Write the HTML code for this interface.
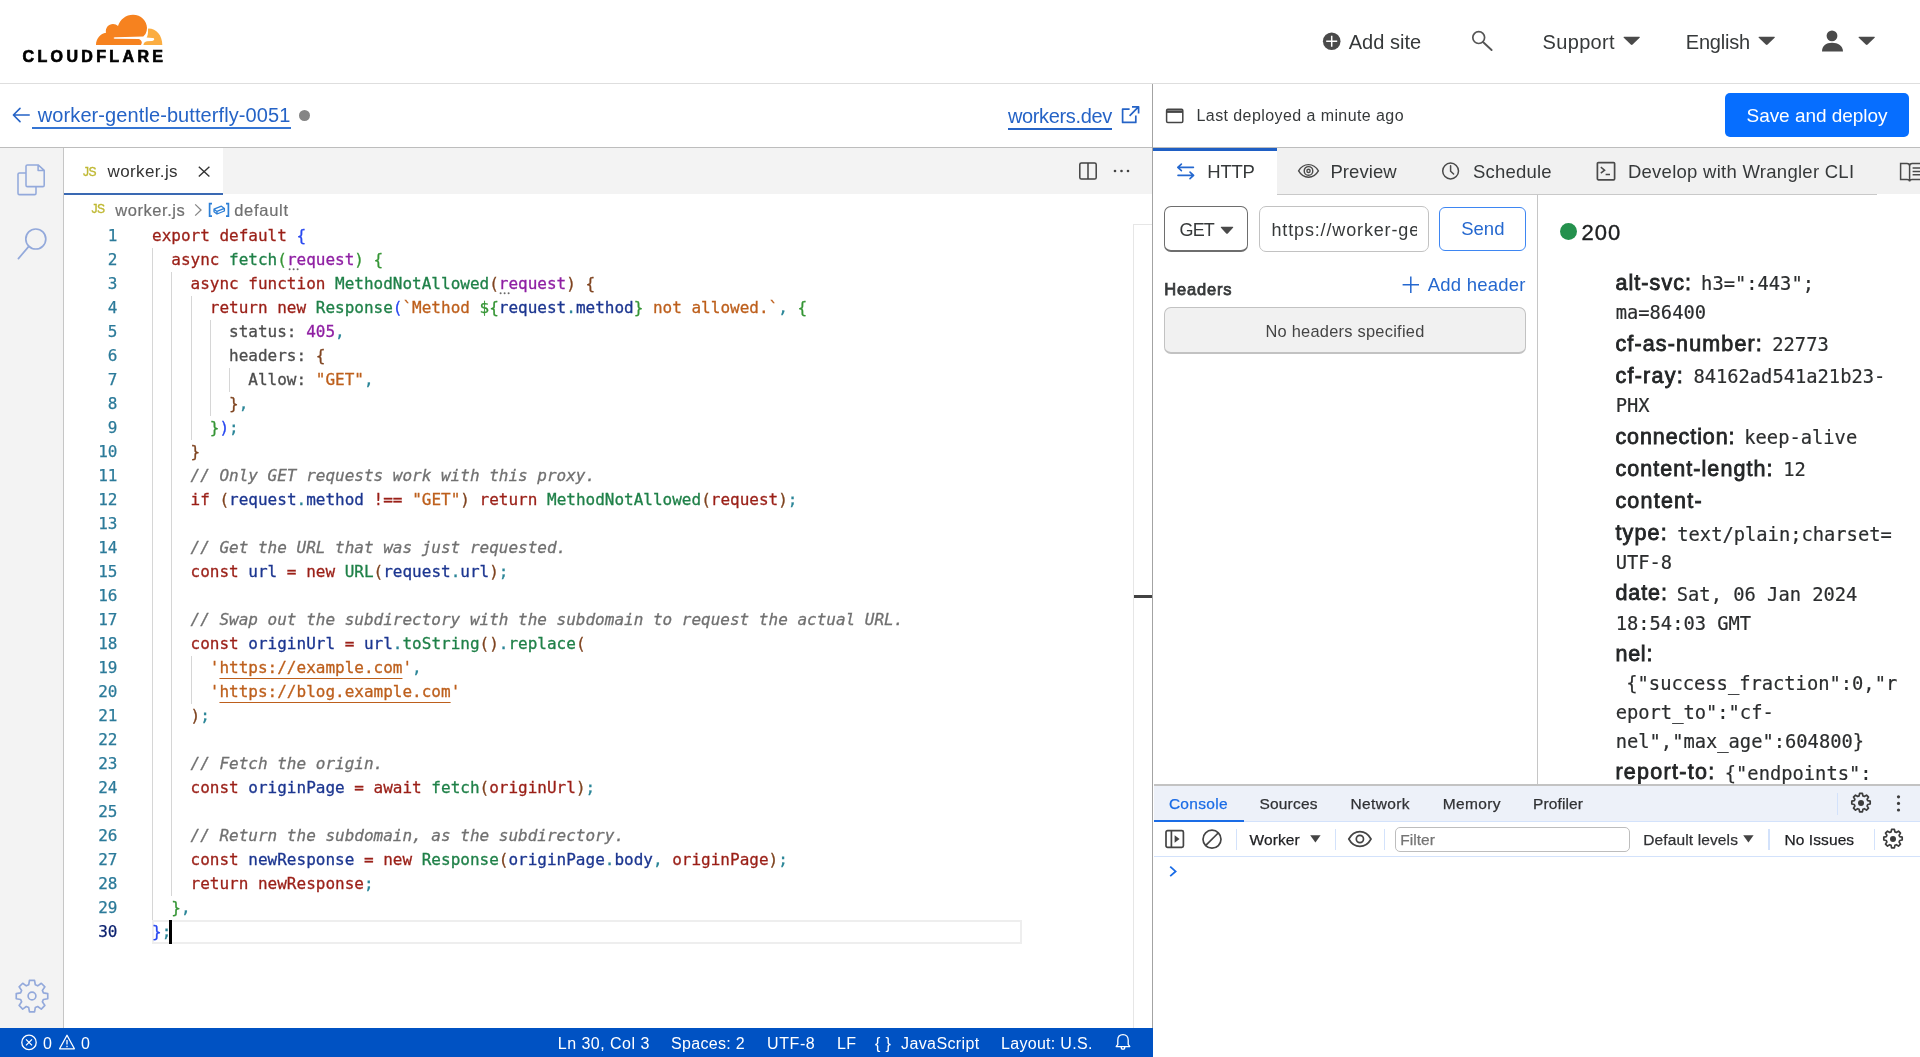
<!DOCTYPE html>
<html lang="en">
<head>
<meta charset="utf-8">
<title>Cloudflare Workers Editor</title>
<style>
*{box-sizing:border-box;margin:0;padding:0}
html,body{width:1920px;height:1057px;overflow:hidden;background:#fff}
body{font-family:"Liberation Sans",sans-serif;color:#313131;position:relative}
#app{position:absolute;left:0;top:0;width:1920px;height:1057px;will-change:transform}
.abs{position:absolute}
.t{position:absolute;white-space:pre;line-height:1}
svg{position:absolute;overflow:visible}
.mono{font-family:"DejaVu Sans Mono","Liberation Mono",monospace}
.ln{-webkit-text-stroke:0.25px;position:absolute;left:64px;width:53.5px;text-align:right;font-size:16px;line-height:24px;height:24px;color:#2b7a99;font-family:"DejaVu Sans Mono","Liberation Mono",monospace}
.cl{-webkit-text-stroke:0.3px;position:absolute;left:152px;font-size:16px;line-height:24px;height:24px;white-space:pre;font-family:"DejaVu Sans Mono","Liberation Mono",monospace;color:#3b3b3b}
.k{color:#9a1f17}.f{color:#1f8048}.p{color:#8f1fa3}.v{color:#1c3690}.s{color:#bd5f1c}.c{color:#707070;font-style:italic}
.n{color:#8f1fa3}.o{color:#2a8597}.g{color:#4d4d4d}
.b1{color:#2848f0}.b2{color:#359535}.b3{color:#7f4420}
.u{text-decoration:underline;text-underline-offset:4.5px;text-decoration-thickness:1px}
.guide{position:absolute;width:1px;background:#d6d6d6}
</style>
</head>
<body>
<div id="app">
<div class="abs" style="left:0;top:0;width:1920px;height:84.3px;border-bottom:1.6px solid #dedede"></div>
<div class="abs" style="left:0;top:146.5px;width:1920px;height:1.4px;background:#bdbdbd"></div>
<div class="abs" style="left:1152px;top:83.5px;width:1.3px;height:974px;background:#a3a3a3"></div>
<svg style="left:0;top:0" width="200" height="84" viewBox="0 0 200 84">
<path fill="#f6821f" d="M96 45 C96 38.5 100.5 33.5 106 32.8 C105 28 108.5 24 113 24 C115 24 116.8 24.8 118 26 C120 19.5 126 14.7 133 14.7 C141 14.7 147 21 147 28 C147 30 146.5 32 145.5 34 L143.3 36.5 L116 37.25 C114.4 37.3 113.6 37.6 113.6 38 C113.6 38.5 114.3 38.7 115.5 38.7 L139 38.9 C141.5 40 142.3 42 141.6 43.6 L141 45 Z"/>
<path fill="#fbad41" d="M148.5 28.5 C156.5 28.5 162.3 35.5 162.3 45 L143.4 45 C143.6 43.3 144.8 41.6 147 41.3 L152 40.9 C153.5 40.7 154.2 40 154.2 39.2 C154.2 38.4 153.6 38 152.5 38 L146.6 37.6 C147.6 36 148.2 33.5 148 30.2 C148 29.2 148.1 28.5 148.5 28.5 Z"/>
</svg>
<div class="t " style="left:22.6px;top:48.9px;font-size:16px;color:#000;letter-spacing:3.35px;font-weight:700;-webkit-text-stroke:0.7px #000;">CLOUDFLARE</div>
<svg style="left:1322px;top:32px" width="20" height="20" viewBox="0 0 20 20"><circle cx="9.7" cy="9.2" r="8.8" fill="#4a4a4a"/><path d="M9.7 3.7v11M4.2 9.2h11" stroke="#fff" stroke-width="1.5"/></svg>
<div class="t " style="left:1348.7px;top:32.3px;font-size:20px;color:#36393a;letter-spacing:0.04px;">Add site</div>
<svg style="left:1470px;top:30px" width="24" height="24" viewBox="0 0 24 24"><circle cx="8.7" cy="7.6" r="5.9" fill="none" stroke="#555" stroke-width="1.7"/><path d="M13 12 L21.6 20" stroke="#555" stroke-width="1.9" stroke-linecap="round"/></svg>
<div class="t " style="left:1542.5px;top:32.3px;font-size:20px;color:#36393a;letter-spacing:0.35px;">Support</div>
<svg style="left:1622.8px;top:35.9px" width="18" height="10" viewBox="0 0 18 10"><path d="M1.2 0.8 H16.2 Q17.4 0.8 16.6 1.8 L9.6 8.6 Q8.7 9.4 7.8 8.6 L0.8 1.8 Q0 0.8 1.2 0.8Z" fill="#4a4a4a"/></svg>
<div class="t " style="left:1685.8px;top:32.3px;font-size:20px;color:#36393a;letter-spacing:-0.2px;">English</div>
<svg style="left:1757.8px;top:35.9px" width="18" height="10" viewBox="0 0 18 10"><path d="M1.2 0.8 H16.2 Q17.4 0.8 16.6 1.8 L9.6 8.6 Q8.7 9.4 7.8 8.6 L0.8 1.8 Q0 0.8 1.2 0.8Z" fill="#4a4a4a"/></svg>
<svg style="left:1820px;top:28px" width="26" height="26" viewBox="0 0 26 26"><circle cx="12" cy="7.9" r="5.4" fill="#4a4a4a"/><path d="M2 23.4 C2 18 6 14.8 12 14.8 C18 14.8 23 18 23 23.4 Z" fill="#4a4a4a"/></svg>
<svg style="left:1857.8px;top:35.9px" width="18" height="10" viewBox="0 0 18 10"><path d="M1.2 0.8 H16.2 Q17.4 0.8 16.6 1.8 L9.6 8.6 Q8.7 9.4 7.8 8.6 L0.8 1.8 Q0 0.8 1.2 0.8Z" fill="#4a4a4a"/></svg>
<svg style="left:10px;top:104px" width="24" height="22" viewBox="0 0 24 22"><path d="M19.2 11 H3.6 M10 4.4 L3.4 11 L10 17.6" fill="none" stroke="#2563c6" stroke-width="1.6" stroke-linecap="round" stroke-linejoin="round"/></svg>
<div class="t " style="left:37.8px;top:104.5px;font-size:20px;color:#2563c6;letter-spacing:0.09px;">worker-gentle-butterfly-0051</div>
<div class="abs" style="left:32px;top:126.8px;width:259px;height:2px;background:#3575d3"></div>
<div class="abs" style="left:299px;top:109.6px;width:11px;height:11px;border-radius:50%;background:#858585"></div>
<div class="t " style="left:1007.9px;top:106.0px;font-size:20px;color:#2563c6;letter-spacing:-0.34px;">workers.dev</div>
<div class="abs" style="left:1007.5px;top:128.3px;width:104.5px;height:2.1px;background:#2563c6"></div>
<svg style="left:1120px;top:104px" width="22" height="22" viewBox="0 0 22 22"><path d="M9.6 5.2 H2.6 V18.4 H15.8 V11.4 M12 2.8 H18.6 V9.4 M18.2 3.2 L9.6 11.8" fill="none" stroke="#2563c6" stroke-width="1.7" stroke-linejoin="round"/></svg>
<svg style="left:1164px;top:106px" width="22" height="20" viewBox="0 0 22 20"><rect x="2.6" y="3.2" width="16.2" height="13.2" rx="1.2" fill="none" stroke="#444" stroke-width="1.5"/><path d="M2.6 5.6 H18.8" stroke="#444" stroke-width="2.6"/></svg>
<div class="t " style="left:1196.5px;top:107.6px;font-size:16px;color:#36393a;letter-spacing:0.42px;">Last deployed a minute ago</div>
<div class="abs" style="left:1725px;top:93px;width:184px;height:44px;border-radius:5px;background:#066eff"></div>
<div class="t " style="left:1746.5px;top:106.0px;font-size:19px;color:#fff;letter-spacing:-0.04px;">Save and deploy</div>
<div class="abs" style="left:0;top:148px;width:64px;height:880px;background:#f3f3f3;border-right:1.5px solid #c6c6c6"></div>
<svg style="left:0px;top:148px" width="64" height="60" viewBox="0 0 64 60"><g fill="none" stroke="#93a9db" stroke-width="1.55" stroke-linejoin="round"><path d="M27.4 16.9 H38.1 L44.2 22.4 V37.2 Q44.2 38.6 42.8 38.6 H27.4 Q26 38.6 26 37.2 V18.3 Q26 16.9 27.4 16.9 Z M38.1 16.9 V22.4 H44.2"/><path d="M26 24.9 H19.4 Q18 24.9 18 26.3 V45.2 Q18 46.6 19.4 46.6 H34.6 Q36 46.6 36 45.2 V38.6"/></g></svg>
<svg style="left:14px;top:224px" width="38" height="40" viewBox="0 0 38 40"><circle cx="21.8" cy="15" r="10" fill="none" stroke="#93a9db" stroke-width="1.7"/><path d="M14.8 22.4 L4.4 34.6" stroke="#93a9db" stroke-width="1.7" stroke-linecap="round"/></svg>
<svg style="left:14px;top:978px" width="36" height="36" viewBox="0 0 24 24"><g fill="none" stroke="#93a9db" stroke-width="1.1" stroke-linejoin="round"><path d="M10.3 1.6h3.4l.5 2.9 1.6.7 2.4-1.7 2.4 2.4-1.7 2.4.7 1.6 2.9.5v3.4l-2.9.5-.7 1.6 1.7 2.4-2.4 2.4-2.4-1.7-1.6.7-.5 2.9h-3.4l-.5-2.9-1.6-.7-2.4 1.7-2.4-2.4 1.7-2.4-.7-1.6-2.9-.5v-3.4l2.9-.5.7-1.6-1.7-2.4 2.4-2.4 2.4 1.7 1.6-.7z"/><circle cx="12" cy="12" r="2.6"/></g></svg>
<div class="abs" style="left:64px;top:148px;width:1088px;height:46px;background:#f3f3f3"></div>
<div class="abs" style="left:64px;top:148px;width:158.5px;height:46.6px;background:#fff;border-bottom:2px solid #3a69b3"></div>
<div class="t " style="left:83.0px;top:165.7px;font-size:12px;color:#bfb832;letter-spacing:-0.5px;-webkit-text-stroke:0.35px;">JS</div>
<div class="t " style="left:107.5px;top:162.9px;font-size:17px;color:#333;letter-spacing:0.38px;">worker.js</div>
<svg style="left:196px;top:164px" width="16" height="16" viewBox="0 0 16 16"><path d="M2.8 2.8 L13.4 12.6 M13.4 2.8 L2.8 12.6" stroke="#333" stroke-width="1.4"/></svg>
<svg style="left:1076.5px;top:159.6px" width="22" height="22" viewBox="0 0 22 22"><rect x="2.8" y="3" width="16.4" height="16" rx="1.6" fill="none" stroke="#424242" stroke-width="1.5"/><path d="M11 3 V19" stroke="#424242" stroke-width="1.5"/></svg>
<svg style="left:1112px;top:166px" width="20" height="10" viewBox="0 0 20 10"><circle cx="3" cy="5" r="1.3" fill="#424242"/><circle cx="9.5" cy="5" r="1.3" fill="#424242"/><circle cx="16" cy="5" r="1.3" fill="#424242"/></svg>
<div class="t " style="left:91.4px;top:203.2px;font-size:12px;color:#bfb832;letter-spacing:-0.5px;-webkit-text-stroke:0.35px;">JS</div>
<div class="t " style="left:115.3px;top:201.5px;font-size:16.5px;color:#707070;letter-spacing:0.54px;-webkit-text-stroke:0.2px;">worker.js</div>
<svg style="left:192px;top:202px" width="12" height="16" viewBox="0 0 12 16"><path d="M3.2 2.4 L9 8 L3.2 13.6" fill="none" stroke="#868686" stroke-width="1.3"/></svg>
<svg style="left:207px;top:201px" width="24" height="18" viewBox="0 0 24 18"><g fill="none" stroke="#2d7fd6" stroke-width="1.7"><path d="M5 2.6 H2.6 V15.2 H5 M19 2.6 H21.4 V15.2 H19"/><path d="M7 8.2 L14.4 5.2 L17.4 7.4 V10 L10 13 L7 10.8 Z M7 8.2 L10 10.4 L17.4 7.4 M10 10.4 V13" stroke-width="1.3" stroke-linejoin="round"/></g></svg>
<div class="t " style="left:234.2px;top:201.5px;font-size:16.5px;color:#707070;letter-spacing:0.71px;-webkit-text-stroke:0.2px;">default</div>
<div class="abs" style="left:1133px;top:224px;width:19px;height:804px;border-left:1px solid #e6e6e6;border-top:1px solid #e6e6e6"></div>
<div class="abs" style="left:1134px;top:595px;width:18px;height:2.5px;background:#424242"></div>
<div class="abs" style="left:152px;top:920px;width:870px;height:24px;border:2px solid #eeeeee"></div>
<div class="guide" style="left:152.0px;top:248px;height:672px"></div>
<div class="guide" style="left:171.3px;top:272px;height:624px"></div>
<div class="guide" style="left:190.5px;top:296px;height:144px"></div>
<div class="guide" style="left:209.8px;top:320px;height:96px"></div>
<div class="guide" style="left:229.1px;top:368px;height:24px"></div>
<div class="guide" style="left:190.5px;top:656px;height:48px"></div>
<div class="ln" style="top:224px">1</div>
<div class="cl" style="top:224px"><span class="k">export default </span><span class="b1">{</span></div>
<div class="ln" style="top:248px">2</div>
<div class="cl" style="top:248px">  <span class="k">async </span><span class="f">fetch</span><span class="b2">(</span><span class="p">request</span><span class="b2">) {</span></div>
<div class="ln" style="top:272px">3</div>
<div class="cl" style="top:272px">    <span class="k">async function </span><span class="f">MethodNotAllowed</span><span class="b3">(</span><span class="p">request</span><span class="b3">) {</span></div>
<div class="ln" style="top:296px">4</div>
<div class="cl" style="top:296px">      <span class="k">return new </span><span class="f">Response</span><span class="b1">(</span><span class="s">`Method </span><span class="b2">${</span><span class="v">request</span><span class="o">.</span><span class="v">method</span><span class="b2">}</span><span class="s"> not allowed.`</span><span class="o">, </span><span class="b2">{</span></div>
<div class="ln" style="top:320px">5</div>
<div class="cl" style="top:320px">        <span class="g">status: </span><span class="n">405</span><span class="o">,</span></div>
<div class="ln" style="top:344px">6</div>
<div class="cl" style="top:344px">        <span class="g">headers: </span><span class="b3">{</span></div>
<div class="ln" style="top:368px">7</div>
<div class="cl" style="top:368px">          <span class="g">Allow: </span><span class="s">"GET"</span><span class="o">,</span></div>
<div class="ln" style="top:392px">8</div>
<div class="cl" style="top:392px">        <span class="b3">}</span><span class="o">,</span></div>
<div class="ln" style="top:416px">9</div>
<div class="cl" style="top:416px">      <span class="b2">}</span><span class="b1">)</span><span class="o">;</span></div>
<div class="ln" style="top:440px">10</div>
<div class="cl" style="top:440px">    <span class="b3">}</span></div>
<div class="ln" style="top:464px">11</div>
<div class="cl" style="top:464px">    <span class="c">// Only GET requests work with this proxy.</span></div>
<div class="ln" style="top:488px">12</div>
<div class="cl" style="top:488px">    <span class="k">if </span><span class="b3">(</span><span class="v">request</span><span class="o">.</span><span class="v">method</span><span class="k"> !== </span><span class="s">"GET"</span><span class="b3">)</span><span class="k"> return </span><span class="f">MethodNotAllowed</span><span class="b3">(</span><span class="k">request</span><span class="b3">)</span><span class="o">;</span></div>
<div class="ln" style="top:512px">13</div>
<div class="ln" style="top:536px">14</div>
<div class="cl" style="top:536px">    <span class="c">// Get the URL that was just requested.</span></div>
<div class="ln" style="top:560px">15</div>
<div class="cl" style="top:560px">    <span class="k">const </span><span class="v">url</span><span class="k"> = new </span><span class="f">URL</span><span class="b3">(</span><span class="v">request</span><span class="o">.</span><span class="v">url</span><span class="b3">)</span><span class="o">;</span></div>
<div class="ln" style="top:584px">16</div>
<div class="ln" style="top:608px">17</div>
<div class="cl" style="top:608px">    <span class="c">// Swap out the subdirectory with the subdomain to request the actual URL.</span></div>
<div class="ln" style="top:632px">18</div>
<div class="cl" style="top:632px">    <span class="k">const </span><span class="v">originUrl</span><span class="k"> = </span><span class="v">url</span><span class="o">.</span><span class="f">toString</span><span class="b3">()</span><span class="o">.</span><span class="f">replace</span><span class="b3">(</span></div>
<div class="ln" style="top:656px">19</div>
<div class="cl" style="top:656px">      <span class="s">'</span><span class="s u">https://example.com</span><span class="s">'</span><span class="o">,</span></div>
<div class="ln" style="top:680px">20</div>
<div class="cl" style="top:680px">      <span class="s">'</span><span class="s u">https://blog.example.com</span><span class="s">'</span></div>
<div class="ln" style="top:704px">21</div>
<div class="cl" style="top:704px">    <span class="b3">)</span><span class="o">;</span></div>
<div class="ln" style="top:728px">22</div>
<div class="ln" style="top:752px">23</div>
<div class="cl" style="top:752px">    <span class="c">// Fetch the origin.</span></div>
<div class="ln" style="top:776px">24</div>
<div class="cl" style="top:776px">    <span class="k">const </span><span class="v">originPage</span><span class="k"> = await </span><span class="f">fetch</span><span class="b3">(</span><span class="k">originUrl</span><span class="b3">)</span><span class="o">;</span></div>
<div class="ln" style="top:800px">25</div>
<div class="ln" style="top:824px">26</div>
<div class="cl" style="top:824px">    <span class="c">// Return the subdomain, as the subdirectory.</span></div>
<div class="ln" style="top:848px">27</div>
<div class="cl" style="top:848px">    <span class="k">const </span><span class="v">newResponse</span><span class="k"> = new </span><span class="f">Response</span><span class="b3">(</span><span class="v">originPage</span><span class="o">.</span><span class="v">body</span><span class="o">, </span><span class="k">originPage</span><span class="b3">)</span><span class="o">;</span></div>
<div class="ln" style="top:872px">28</div>
<div class="cl" style="top:872px">    <span class="k">return newResponse</span><span class="o">;</span></div>
<div class="ln" style="top:896px">29</div>
<div class="cl" style="top:896px">  <span class="b2">}</span><span class="o">,</span></div>
<div class="ln" style="top:920px;color:#0b216f">30</div>
<div class="cl" style="top:920px"><span class="b1">}</span><span class="o">;</span></div>
<svg style="left:287.5px;top:267.8px" width="12" height="3" viewBox="0 0 12 3"><circle cx="1.6" cy="1.2" r="1" fill="#6a6a6a"/><circle cx="5.6" cy="1.2" r="1" fill="#6a6a6a"/><circle cx="9.6" cy="1.2" r="1" fill="#6a6a6a"/></svg>
<svg style="left:499.4px;top:291.8px" width="12" height="3" viewBox="0 0 12 3"><circle cx="1.6" cy="1.2" r="1" fill="#6a6a6a"/><circle cx="5.6" cy="1.2" r="1" fill="#6a6a6a"/><circle cx="9.6" cy="1.2" r="1" fill="#6a6a6a"/></svg>
<div class="abs" style="left:169.3px;top:920px;width:2.6px;height:24px;background:#000"></div>
<div class="abs" style="left:1153.3px;top:147.9px;width:767px;height:46.6px;background:#f1f1f1"></div>
<div class="abs" style="left:1277px;top:193.6px;width:599.5px;height:1.4px;background:#c9c9c9"></div>
<div class="abs" style="left:1153.3px;top:147.7px;width:123.7px;height:47.3px;background:#fff;border-top:3px solid #1f5fc4"></div>
<svg style="left:1175px;top:161px" width="22" height="22" viewBox="0 0 22 22"><g fill="none" stroke="#2568cf" stroke-width="1.6" stroke-linecap="round" stroke-linejoin="round"><path d="M18.4 6.4 H3 M6.4 3.1 L2.8 6.4 L6.4 9.7"/><path d="M3 14.4 H18.4 M15 11.1 L18.6 14.4 L15 17.7"/></g></svg>
<div class="t " style="left:1207.3px;top:163.3px;font-size:18.5px;color:#36393a;letter-spacing:-0.25px;">HTTP</div>
<svg style="left:1297px;top:161px" width="24" height="20" viewBox="0 0 24 20"><g fill="none" stroke="#4a4a4a" stroke-width="1.4"><path d="M1.6 9.9 C4.2 5.4 7.6 3.6 11.5 3.6 C15.4 3.6 18.8 5.4 21.4 9.9 C18.8 14.4 15.4 16.2 11.5 16.2 C7.6 16.2 4.2 14.4 1.6 9.9 Z"/><circle cx="11.5" cy="9.9" r="4.3"/><circle cx="11.5" cy="9.9" r="1.6"/></g></svg>
<div class="t " style="left:1330.4px;top:163.3px;font-size:18.5px;color:#36393a;letter-spacing:0.08px;">Preview</div>
<svg style="left:1440px;top:160px" width="22" height="22" viewBox="0 0 22 22"><g fill="none" stroke="#4a4a4a" stroke-width="1.5" stroke-linecap="round"><circle cx="10.6" cy="11" r="7.9"/><path d="M10.6 5.8 V11.2 L13.6 14"/></g></svg>
<div class="t " style="left:1473.0px;top:163.3px;font-size:18.5px;color:#36393a;letter-spacing:0.21px;">Schedule</div>
<svg style="left:1595px;top:160px" width="22" height="22" viewBox="0 0 22 22"><g fill="none" stroke="#4a4a4a" stroke-width="1.5"><rect x="2.4" y="2.6" width="17.2" height="17.2" rx="1" stroke-width="1.7"/><path d="M5.8 7.2 L9.6 10.2 L5.8 13.2 M10.6 14.4 H15"/></g></svg>
<div class="t " style="left:1627.9px;top:163.3px;font-size:18.5px;color:#36393a;letter-spacing:0.27px;">Develop with Wrangler CLI</div>
<svg style="left:1898px;top:160px" width="22" height="24" viewBox="0 0 22 24"><g fill="none" stroke="#4a4a4a" stroke-width="1.5"><path d="M2.6 3.4 H9 Q11.6 3.4 11.6 6 V21.4 Q11.6 19.6 9 19.6 H2.6 Z M11.6 6 Q11.6 3.4 14.2 3.4 H22 M11.6 21.4 Q11.6 19.6 14.2 19.6 H22 M14.6 8 H22 M14.6 11.4 H22 M14.6 14.8 H22"/></g></svg>
<div class="abs" style="left:1164px;top:206px;width:83.5px;height:45.5px;border:1.5px solid #6e6e6e;border-bottom-width:2px;border-radius:7px;background:#fff"></div>
<div class="t " style="left:1179.5px;top:220.6px;font-size:18px;color:#36393a;letter-spacing:-0.84px;">GET</div>
<svg style="left:1219.5px;top:226px" width="15" height="9" viewBox="0 0 15 9"><path d="M1.4 0.8 H12.6 Q13.8 0.8 13 1.8 L7.8 7.4 Q7 8.2 6.2 7.4 L1 1.8 Q0.2 0.8 1.4 0.8Z" fill="#4a4a4a"/></svg>
<div class="abs" style="left:1258.5px;top:206px;width:170px;height:45.5px;border:1.3px solid #c2c2c2;border-bottom-width:1.8px;border-radius:7px;background:#fff"></div>
<div class="abs" style="left:1271.5px;top:214px;width:145px;height:32px;overflow:hidden"><div class="t" style="left:0;top:6.6px;font-size:18px;color:#36393a;letter-spacing:0.85px">https://worker-gentle-butterfly-0051.example.workers.dev/</div></div>
<div class="abs" style="left:1439px;top:207px;width:87px;height:43.5px;border:1.6px solid #3e86f2;border-radius:6px;background:#fff"></div>
<div class="t " style="left:1461.2px;top:220.1px;font-size:18.5px;color:#2568cf;letter-spacing:0.02px;">Send</div>
<div class="t " style="left:1164.2px;top:281.1px;font-size:16.5px;color:#36393a;letter-spacing:0.833px;-webkit-text-stroke:0.75px;">Headers</div>
<svg style="left:1401px;top:275px" width="20" height="20" viewBox="0 0 20 20"><path d="M9.8 1.6 V18 M1.6 9.8 H18" stroke="#2568cf" stroke-width="1.5"/></svg>
<div class="t " style="left:1427.7px;top:275.8px;font-size:18.5px;color:#2568cf;letter-spacing:0.24px;">Add header</div>
<div class="abs" style="left:1164px;top:306.5px;width:362px;height:47.5px;border:1.5px solid #c2c2c2;border-bottom-width:2px;border-radius:7px;background:#f1f1f1"></div>
<div class="t " style="left:1265.4px;top:322.9px;font-size:16.4px;color:#444;letter-spacing:0.26px;">No headers specified</div>
<div class="abs" style="left:1537px;top:195px;width:1.4px;height:590px;background:#c6c6c6"></div>
<div class="abs" style="left:1559.5px;top:223px;width:17.6px;height:17.4px;border-radius:50%;background:#24914d"></div>
<div class="t " style="left:1581.6px;top:222.1px;font-size:22px;color:#1d1f20;letter-spacing:0.95px;-webkit-text-stroke:0.4px #1d1f20;">200</div>
<div class="t " style="left:1615.4px;top:273.0px;font-size:21.5px;color:#232526;letter-spacing:1.076px;-webkit-text-stroke:0.8px #232526;">alt-svc:</div>
<div class="t mono" style="left:1701.1px;top:275.3px;font-size:18.75px;color:#2b2d2e;-webkit-text-stroke:0.2px #2b2d2e;">h3=":443";</div>
<div class="t mono" style="left:1615.7px;top:304.2px;font-size:18.75px;color:#2b2d2e;-webkit-text-stroke:0.2px #2b2d2e;">ma=86400</div>
<div class="t " style="left:1615.4px;top:334.0px;font-size:21.5px;color:#232526;letter-spacing:1.152px;-webkit-text-stroke:0.8px #232526;">cf-as-number:</div>
<div class="t mono" style="left:1772.3px;top:336.3px;font-size:18.75px;color:#2b2d2e;-webkit-text-stroke:0.2px #2b2d2e;">22773</div>
<div class="t " style="left:1615.4px;top:365.7px;font-size:21.5px;color:#232526;letter-spacing:1.282px;-webkit-text-stroke:0.8px #232526;">cf-ray:</div>
<div class="t mono" style="left:1693.4px;top:368.0px;font-size:18.75px;color:#2b2d2e;-webkit-text-stroke:0.2px #2b2d2e;">84162ad541a21b23-</div>
<div class="t mono" style="left:1615.7px;top:397.0px;font-size:18.75px;color:#2b2d2e;-webkit-text-stroke:0.2px #2b2d2e;">PHX</div>
<div class="t " style="left:1615.4px;top:426.7px;font-size:21.5px;color:#232526;letter-spacing:0.921px;-webkit-text-stroke:0.8px #232526;">connection:</div>
<div class="t mono" style="left:1744.3px;top:429.0px;font-size:18.75px;color:#2b2d2e;-webkit-text-stroke:0.2px #2b2d2e;">keep-alive</div>
<div class="t " style="left:1615.4px;top:458.6px;font-size:21.5px;color:#232526;letter-spacing:1.057px;-webkit-text-stroke:0.8px #232526;">content-length:</div>
<div class="t mono" style="left:1783.3px;top:460.9px;font-size:18.75px;color:#2b2d2e;-webkit-text-stroke:0.2px #2b2d2e;">12</div>
<div class="t " style="left:1615.4px;top:491.2px;font-size:21.5px;color:#232526;letter-spacing:1.214px;-webkit-text-stroke:0.8px #232526;">content-</div>
<div class="t " style="left:1615.4px;top:523.2px;font-size:21.5px;color:#232526;letter-spacing:1.178px;-webkit-text-stroke:0.8px #232526;">type:</div>
<div class="t mono" style="left:1677.3px;top:525.5px;font-size:18.75px;color:#2b2d2e;-webkit-text-stroke:0.2px #2b2d2e;">text/plain;charset=</div>
<div class="t mono" style="left:1615.7px;top:553.9px;font-size:18.75px;color:#2b2d2e;-webkit-text-stroke:0.2px #2b2d2e;">UTF-8</div>
<div class="t " style="left:1615.4px;top:583.4px;font-size:21.5px;color:#232526;letter-spacing:0.936px;-webkit-text-stroke:0.8px #232526;">date:</div>
<div class="t mono" style="left:1676.8px;top:585.7px;font-size:18.75px;color:#2b2d2e;-webkit-text-stroke:0.2px #2b2d2e;">Sat, 06 Jan 2024</div>
<div class="t mono" style="left:1615.7px;top:614.7px;font-size:18.75px;color:#2b2d2e;-webkit-text-stroke:0.2px #2b2d2e;">18:54:03 GMT</div>
<div class="t " style="left:1615.4px;top:643.9px;font-size:21.5px;color:#232526;letter-spacing:0.784px;-webkit-text-stroke:0.8px #232526;">nel:</div>
<div class="t mono" style="left:1626.3px;top:675.1px;font-size:18.75px;color:#2b2d2e;-webkit-text-stroke:0.2px #2b2d2e;">{"success_fraction":0,"r</div>
<div class="t mono" style="left:1615.7px;top:703.5px;font-size:18.75px;color:#2b2d2e;-webkit-text-stroke:0.2px #2b2d2e;">eport_to":"cf-</div>
<div class="t mono" style="left:1615.7px;top:732.5px;font-size:18.75px;color:#2b2d2e;-webkit-text-stroke:0.2px #2b2d2e;">nel","max_age":604800}</div>
<div class="t " style="left:1615.4px;top:762.2px;font-size:21.5px;color:#232526;letter-spacing:1.297px;-webkit-text-stroke:0.8px #232526;">report-to:</div>
<div class="t mono" style="left:1724.8px;top:764.5px;font-size:18.75px;color:#2b2d2e;-webkit-text-stroke:0.2px #2b2d2e;">{"endpoints":</div>
<div class="abs" style="left:1154px;top:784.2px;width:766px;height:1.5px;background:#c3c3c3"></div>
<div class="abs" style="left:1154px;top:785.7px;width:766px;height:36px;background:#edf1f9;border-bottom:1.2px solid #d3e2fb"></div>
<div class="abs" style="left:1154px;top:819.6px;width:89.8px;height:2.4px;background:#1a6ce6"></div>
<div class="t " style="left:1168.9px;top:796.1px;font-size:15.5px;color:#1a6ce6;letter-spacing:0.29px;-webkit-text-stroke:0.25px;">Console</div>
<div class="t " style="left:1259.5px;top:796.1px;font-size:15.5px;color:#303134;letter-spacing:0.18px;-webkit-text-stroke:0.25px;">Sources</div>
<div class="t " style="left:1350.5px;top:796.1px;font-size:15.5px;color:#303134;letter-spacing:0.36px;-webkit-text-stroke:0.25px;">Network</div>
<div class="t " style="left:1442.8px;top:796.1px;font-size:15.5px;color:#303134;letter-spacing:0.35px;-webkit-text-stroke:0.25px;">Memory</div>
<div class="t " style="left:1533.0px;top:796.1px;font-size:15.5px;color:#303134;letter-spacing:0.12px;-webkit-text-stroke:0.25px;">Profiler</div>
<div class="abs" style="left:1836.5px;top:793px;width:1.2px;height:22px;background:#d3e2fb"></div>
<svg style="left:1849px;top:791px" width="24" height="24" viewBox="0 0 24 24"><g fill="none" stroke="#3c3c3c" stroke-width="1.7" stroke-linejoin="round"><path d="M10.6 2.4h2.8l.5 2.5 1.5.6 2.1-1.4 2 2-1.4 2.1.6 1.5 2.5.5v2.8l-2.5.5-.6 1.5 1.4 2.1-2 2-2.1-1.4-1.5.6-.5 2.5h-2.8l-.5-2.5-1.5-.6-2.1 1.4-2-2 1.4-2.1-.6-1.5-2.5-.5v-2.8l2.5-.5.6-1.5-1.4-2.1 2-2 2.1 1.4 1.5-.6z"/></g><circle cx="12" cy="12" r="3" fill="#3c3c3c"/></svg>
<svg style="left:1895px;top:794px" width="8" height="20" viewBox="0 0 8 20"><circle cx="3.5" cy="2.8" r="1.6" fill="#3c3c3c"/><circle cx="3.5" cy="9.4" r="1.6" fill="#3c3c3c"/><circle cx="3.5" cy="16" r="1.6" fill="#3c3c3c"/></svg>
<div class="abs" style="left:1154px;top:822.8px;width:766px;height:34.6px;background:#fff;border-bottom:1.2px solid #d3e2fb"></div>
<svg style="left:1163px;top:827px" width="24" height="24" viewBox="0 0 24 24"><g fill="none" stroke="#444" stroke-width="1.7"><rect x="3" y="3.6" width="17.4" height="16.8" rx="1.6"/><path d="M8.4 3.6 V20.4"/></g><path d="M11.6 8.2 L16.6 12 L11.6 15.8 Z" fill="#444"/></svg>
<svg style="left:1200px;top:827px" width="24" height="24" viewBox="0 0 24 24"><g fill="none" stroke="#444" stroke-width="1.7"><circle cx="12" cy="12.2" r="9"/><path d="M5.8 18.4 L18.2 6"/></g></svg>
<div class="abs" style="left:1236.2px;top:829px;width:1.2px;height:21px;background:#d3e2fb"></div>
<div class="t " style="left:1249.5px;top:832.0px;font-size:15.5px;color:#202124;letter-spacing:0.12px;-webkit-text-stroke:0.25px;">Worker</div>
<svg style="left:1310.4px;top:835.3px" width="11" height="8" viewBox="0 0 11 8"><path d="M0.2 0.2 H10.6 L5.4 7.4 Z" fill="#444"/></svg>
<div class="abs" style="left:1334.8px;top:829px;width:1.2px;height:21px;background:#d3e2fb"></div>
<svg style="left:1347px;top:828px" width="26" height="22" viewBox="0 0 26 22"><g fill="none" stroke="#444" stroke-width="1.7"><path d="M1.8 11 C4.6 5.8 8.4 3.6 12.9 3.6 C17.4 3.6 21.2 5.8 24 11 C21.2 16.2 17.4 18.4 12.9 18.4 C8.4 18.4 4.6 16.2 1.8 11 Z"/><circle cx="12.9" cy="11" r="3.6"/></g></svg>
<div class="abs" style="left:1384.2px;top:829px;width:1.2px;height:21px;background:#d3e2fb"></div>
<div class="abs" style="left:1395px;top:827px;width:235.4px;height:24.6px;border:1.2px solid #bdbdbd;border-radius:5px;background:#fff"></div>
<div class="t " style="left:1400.3px;top:832.0px;font-size:15.5px;color:#757575;letter-spacing:0.04px;-webkit-text-stroke:0.25px;">Filter</div>
<div class="t " style="left:1643.3px;top:832.0px;font-size:15.5px;color:#303134;letter-spacing:0.12px;-webkit-text-stroke:0.25px;">Default levels</div>
<svg style="left:1743.2px;top:835.3px" width="11" height="8" viewBox="0 0 11 8"><path d="M0.2 0.2 H10.6 L5.4 7.4 Z" fill="#444"/></svg>
<div class="abs" style="left:1768.4px;top:829px;width:1.2px;height:21px;background:#d3e2fb"></div>
<div class="t " style="left:1784.4px;top:832.0px;font-size:15.5px;color:#202124;letter-spacing:0.1px;-webkit-text-stroke:0.25px;">No Issues</div>
<div class="abs" style="left:1873.5px;top:829px;width:1.2px;height:21px;background:#d3e2fb"></div>
<svg style="left:1881px;top:827px" width="24" height="24" viewBox="0 0 24 24"><g fill="none" stroke="#3c3c3c" stroke-width="1.7" stroke-linejoin="round"><path d="M10.6 2.4h2.8l.5 2.5 1.5.6 2.1-1.4 2 2-1.4 2.1.6 1.5 2.5.5v2.8l-2.5.5-.6 1.5 1.4 2.1-2 2-2.1-1.4-1.5.6-.5 2.5h-2.8l-.5-2.5-1.5-.6-2.1 1.4-2-2 1.4-2.1-.6-1.5-2.5-.5v-2.8l2.5-.5.6-1.5-1.4-2.1 2-2 2.1 1.4 1.5-.6z"/></g><circle cx="12" cy="12" r="3" fill="#3c3c3c"/></svg>
<svg style="left:1167px;top:864px" width="12" height="14" viewBox="0 0 12 14"><path d="M3.2 2.6 L8.6 7.4 L3.2 12.2" fill="none" stroke="#1a6ce6" stroke-width="1.8"/></svg>
<div class="abs" style="left:0;top:1028px;width:1152.5px;height:29px;background:#0052c3"></div>
<svg style="left:20px;top:1033px" width="18" height="18" viewBox="0 0 18 18"><g fill="none" stroke="#fff" stroke-width="1.3"><circle cx="9" cy="9.4" r="7.2"/><path d="M6 6.4 L12 12.4 M12 6.4 L6 12.4"/></g></svg>
<div class="t " style="left:43.0px;top:1035.7px;font-size:16px;color:#fff;letter-spacing:0.3px;">0</div>
<svg style="left:58px;top:1033px" width="18" height="18" viewBox="0 0 18 18"><g fill="none" stroke="#fff" stroke-width="1.3" stroke-linejoin="round"><path d="M9 2.2 L16.4 15.8 H1.6 Z"/><path d="M9 7 V11.6 M9 12.8 V14.2"/></g></svg>
<div class="t " style="left:81.0px;top:1035.7px;font-size:16px;color:#fff;letter-spacing:0.3px;">0</div>
<div class="t " style="left:557.8px;top:1035.7px;font-size:16px;color:#fff;letter-spacing:0.48px;">Ln 30, Col 3</div>
<div class="t " style="left:671.0px;top:1035.7px;font-size:16px;color:#fff;letter-spacing:0.32px;">Spaces: 2</div>
<div class="t " style="left:767.0px;top:1035.7px;font-size:16px;color:#fff;letter-spacing:0.6px;">UTF-8</div>
<div class="t " style="left:837.0px;top:1035.7px;font-size:16px;color:#fff;letter-spacing:0.3px;">LF</div>
<div class="t " style="left:875.0px;top:1035.7px;font-size:16px;color:#fff;letter-spacing:0.3px;">{ }</div>
<div class="t " style="left:901.0px;top:1035.7px;font-size:16px;color:#fff;letter-spacing:0.4px;">JavaScript</div>
<div class="t " style="left:1001.0px;top:1035.7px;font-size:16px;color:#fff;letter-spacing:0.3px;">Layout: U.S.</div>
<svg style="left:1113px;top:1032px" width="20" height="20" viewBox="0 0 20 20"><path d="M10 2.6 C6.6 2.6 4.8 5 4.8 8 V12.4 L3.2 14.6 H16.8 L15.2 12.4 V8 C15.2 5 13.4 2.6 10 2.6 Z M8.2 15 Q8.2 17.2 10 17.2 Q11.8 17.2 11.8 15" fill="none" stroke="#fff" stroke-width="1.3" stroke-linejoin="round"/></svg>
</div>
</body>
</html>
